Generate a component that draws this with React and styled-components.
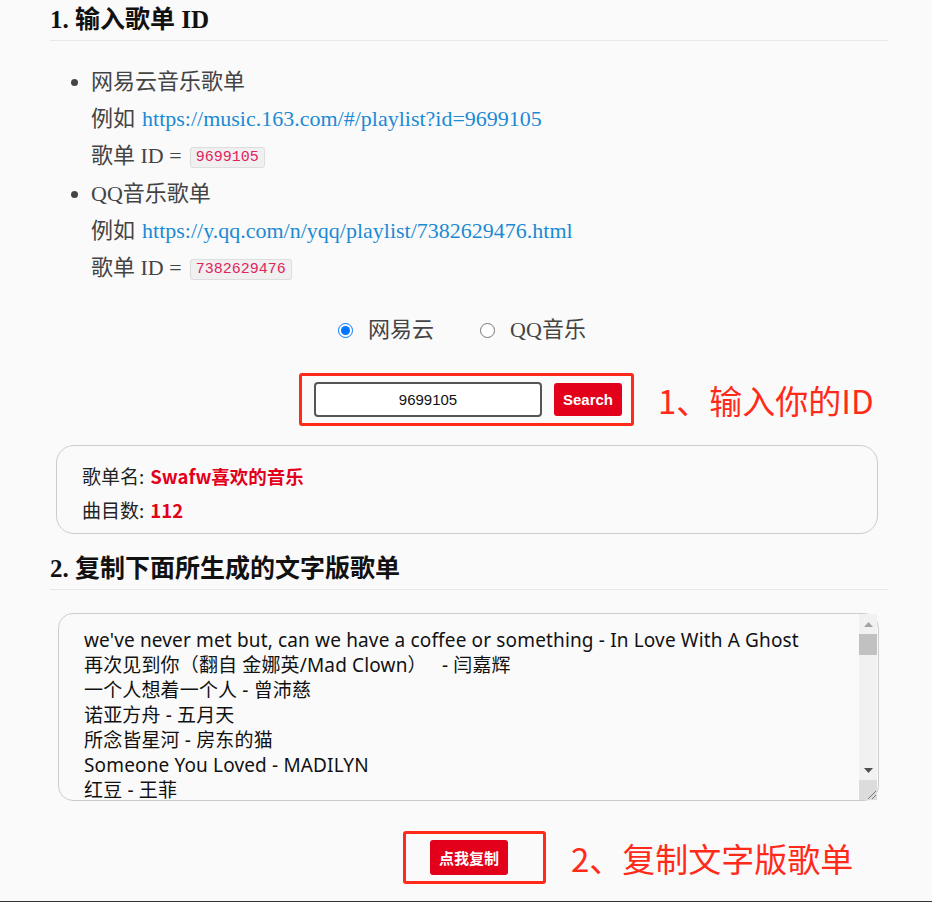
import React from "react";
import styled, { createGlobalStyle } from "styled-components";

const GlobalStyle = createGlobalStyle`
  body {
    margin: 0;
    background: #fafafa;
    font-family: "Liberation Serif", "Noto Sans CJK SC", serif;
    color: #333;
  }
`;

const Page = styled.div`
  width: 838px;
  margin-left: 50px;
  padding-top: 4px;
`;

const Heading = styled.h2`
  margin: 0;
  padding: 2px 0 6px;
  font-size: 25px;
  font-weight: bold;
  color: #111;
  border-bottom: 1px solid #e8e8e8;
  line-height: 28px;
`;

const List = styled.ul`
  margin: 22px 0 0;
  padding-left: 41px;
  font-size: 22px;
  color: #444;
`;

const Line = styled.div`
  height: 37.2px;
  line-height: 37.2px;
  color: #444;
`;

const Link = styled.a`
  color: #1c8ad3;
  text-decoration: none;
  margin-left: 7px;
`;

const Code = styled.code`
  font-family: "Liberation Mono", "DejaVu Sans Mono", monospace;
  font-size: 15px;
  line-height: 18px;
  color: #e0245e;
  background: #f0f0f0;
  border: 1px solid #ddd;
  border-radius: 3px;
  padding: 1px 5px;
  margin-left: 8px;
  vertical-align: 2px;
`;

const RadioRow = styled.div`
  display: flex;
  justify-content: center;
  gap: 46px;
  margin: 29px 14px 0 0;
  font-size: 22px;
  line-height: 30px;
`;

const RadioLabel = styled.label`
  display: flex;
  align-items: center;
  gap: 15px;
  color: #444;
  input {
    margin: 0;
    width: 15px;
    height: 15px;
  }
`;

const SearchRow = styled.div`
  display: flex;
  align-items: center;
  margin: 28px 0 0 249px;
  gap: 24px;
`;

const Annot = styled.div`
  border: 3px solid #ff2a1a;
  border-radius: 3px;
  display: flex;
  align-items: center;
  gap: ${(p) => p.$gap || 0}px;
  padding: ${(p) => p.$pad};
`;

const Input = styled.input`
  width: 228px;
  height: 35px;
  box-sizing: border-box;
  border: 2px solid #555;
  border-radius: 4px;
  text-align: center;
  font-family: "Liberation Sans", Arial, sans-serif;
  font-size: 15px;
  color: #111;
  background: #fff;
`;

const RedButton = styled.button`
  background: #e2001b;
  color: #fff;
  border: none;
  border-radius: 3px;
  font-family: "Liberation Sans", "Noto Sans CJK SC", sans-serif;
  font-weight: bold;
  font-size: ${(p) => p.$size || 15}px;
  height: ${(p) => p.$h}px;
  width: ${(p) => p.$w}px;
  padding: 0;
`;

const Note = styled.span`
  color: #ff2a1a;
  font-family: "Noto Sans CJK SC", "Liberation Sans", sans-serif;
  font-size: 33px;
  line-height: 40px;
`;

const Card = styled.div`
  margin: 19px 10px 0 6px;
  border: 1px solid #ccc;
  border-radius: 18px;
  padding: 13px 25px 6px;
  font-family: "Noto Sans CJK SC", "Noto Sans", sans-serif;
  font-size: 19px;
  line-height: 33px;
  color: #222;
`;

const Value = styled.b`
  color: #e2001b;
  margin-left: 6px;
  font-size: 18.5px;
`;

const Heading2 = styled(Heading)`
  margin-top: 19px;
`;

const AreaBox = styled.div`
  display: flex;
  margin: 23px 9px 0 8px;
  height: 188px;
  box-sizing: border-box;
  border: 1px solid #ccc;
  border-radius: 15px;
  background: #fafafa;
`;

const Area = styled.textarea`
  flex: 1;
  border: none;
  outline: none;
  background: transparent;
  padding: 14px 25px;
  border-radius: 15px 0 0 15px;
  font-family: "Noto Sans", "Noto Sans CJK SC", sans-serif;
  font-size: 19px;
  letter-spacing: 0.15px;
  line-height: 25px;
  color: #111;
  resize: none;
  white-space: pre;
  overflow: hidden;
`;

const Track = styled.div`
  width: 18px;
  margin-right: 1px;
  background: #f1f1f1;
  display: flex;
  flex-direction: column;
`;

const Arrow = styled.div`
  height: 20px;
  display: flex;
  align-items: center;
  justify-content: center;
`;

const Thumb = styled.div`
  height: 21px;
  background: #c1c1c1;
`;

const TrackFill = styled.div`
  flex: 1;
`;

const Grip = styled.div`
  height: 20px;
  background: #dcdcdc;
  display: flex;
  align-items: flex-end;
  justify-content: flex-end;
`;

const CopyRow = styled.div`
  display: flex;
  align-items: center;
  margin: 30px 0 0 353px;
  gap: 25px;
`;

const Bottom = styled.div`
  margin-top: 17px;
  margin-left: -50px;
  width: 932px;
  border-top: 2px solid #333;
`;

const songs = [
  "we've never met but, can we have a coffee or something - In Love With A Ghost",
  "再次见到你（翻自 金娜英/Mad Clown）   - 闫嘉辉",
  "一个人想着一个人 - 曾沛慈",
  "诺亚方舟 - 五月天",
  "所念皆星河 - 房东的猫",
  "Someone You Loved - MADILYN",
  "红豆 - 王菲",
  "晴天 - 周杰伦",
].join("\n");

function Scrollbar() {
  return (
    <Track>
      <Arrow>
        <svg width="9" height="5" viewBox="0 0 9 5">
          <path d="M0 5 L4.5 0 L9 5 Z" fill="#a3a3a3" />
        </svg>
      </Arrow>
      <Thumb />
      <TrackFill />
      <Arrow>
        <svg width="9" height="5" viewBox="0 0 9 5">
          <path d="M0 0 L4.5 5 L9 0 Z" fill="#505050" />
        </svg>
      </Arrow>
      <Grip>
        <svg width="12" height="12" viewBox="0 0 12 12">
          <path d="M11 3 L3 11 M11 7 L7 11" stroke="#777" strokeWidth="1" />
        </svg>
      </Grip>
    </Track>
  );
}

export default function App() {
  return (
    <Page>
      <GlobalStyle />
      <Heading>1. 输入歌单 ID</Heading>
      <List>
        <li>
          <Line>网易云音乐歌单</Line>
          <Line>
            例如<Link href="#">https://music.163.com/#/playlist?id=9699105</Link>
          </Line>
          <Line>
            歌单 ID =<Code>9699105</Code>
          </Line>
        </li>
        <li>
          <Line>QQ音乐歌单</Line>
          <Line>
            例如<Link href="#">https://y.qq.com/n/yqq/playlist/7382629476.html</Link>
          </Line>
          <Line>
            歌单 ID =<Code>7382629476</Code>
          </Line>
        </li>
      </List>
      <RadioRow>
        <RadioLabel>
          <input type="radio" name="src" defaultChecked />
          网易云
        </RadioLabel>
        <RadioLabel>
          <input type="radio" name="src" />
          QQ音乐
        </RadioLabel>
      </RadioRow>
      <SearchRow>
        <Annot $gap={12} $pad="6px 9px 6px 12px">
          <Input defaultValue="9699105" />
          <RedButton $w={68} $h={33}>Search</RedButton>
        </Annot>
        <Note>1、输入你的ID</Note>
      </SearchRow>
      <Card>
        <div>
          歌单名:<Value>Swafw喜欢的音乐</Value>
        </div>
        <div>
          曲目数:<Value>112</Value>
        </div>
      </Card>
      <Heading2>2. 复制下面所生成的文字版歌单</Heading2>
      <AreaBox>
        <Area defaultValue={songs} readOnly />
        <Scrollbar />
      </AreaBox>
      <CopyRow>
        <Annot $pad="6px 35px 6px 24px">
          <RedButton $w={78} $h={35} $size={15}>点我复制</RedButton>
        </Annot>
        <Note>2、复制文字版歌单</Note>
      </CopyRow>
      <Bottom />
    </Page>
  );
}
